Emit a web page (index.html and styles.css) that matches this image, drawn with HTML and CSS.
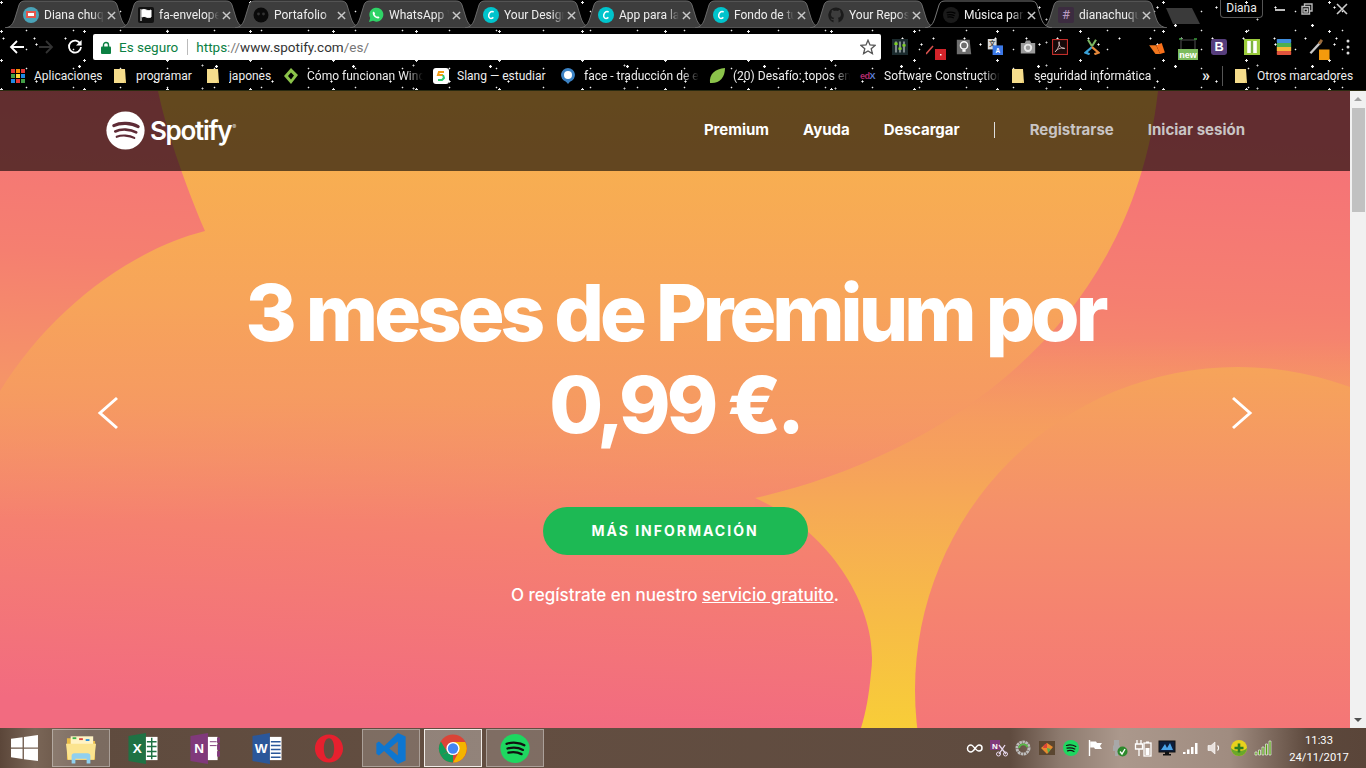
FILE: index.html
```html
<!DOCTYPE html>
<html lang="es">
<head>
<meta charset="utf-8">
<title>Música para todos - Spotify</title>
<link rel="stylesheet" href="styles.css">
</head>
<body>
<svg class="defs" width="0" height="0" aria-hidden="true">
  <defs>
    <symbol id="tabshape" viewBox="0 0 127 28"><path d="M0 28 C6 27 8 24 10 18 L14 5 C15 2 17 1 20 1 L106 1 C109 1 111 2 112 5 L116 18 C118 24 121 27 127 28 Z"/></symbol>
    <symbol id="folder" viewBox="0 0 16 16"><path d="M2 1 H13 L14 15 H2 Z" fill="#f6dd8c"/><path d="M12 1 V13 L14 15 H12 Z" fill="#e7c565"/></symbol>
    <symbol id="canva" viewBox="0 0 16 16"><circle cx="8" cy="8" r="8" fill="#00c4cc"/><path d="M10.6 5.2 C9.4 3.8 6.4 4.6 5.7 8 C5.2 11 7.6 12.6 10.4 10.4" fill="none" stroke="#fff" stroke-width="1.5"/></symbol>
    <symbol id="close" viewBox="0 0 10 10"><path d="M1 1 L9 9 M9 1 L1 9" stroke="#c8c8c8" stroke-width="1.6"/></symbol>
  </defs>
</svg>

<header class="chrome">
  <div class="tabstrip">
    <div class="tab">
      <svg class="tab-bg"><use href="#tabshape"/></svg>
      <svg class="fav" viewBox="0 0 16 16"><circle cx="8" cy="8" r="8" fill="#4aa3b8"/><rect x="3" y="4" width="10" height="7" fill="#e2574c"/><rect x="5" y="6" width="6" height="3" fill="#fff"/></svg>
      <span class="tab-title">Diana chuquimarca</span><svg class="tab-x"><use href="#close"/></svg>
    </div>
    <div class="tab">
      <svg class="tab-bg"><use href="#tabshape"/></svg>
      <svg class="fav" viewBox="0 0 16 16"><rect width="16" height="16" rx="2" fill="#111"/><path d="M3 2 V14 M4 3 C7 1 9 5 13 3 V10 C9 12 7 8 4 10 Z" fill="#fff" stroke="#fff"/></svg>
      <span class="tab-title">fa-envelope</span><svg class="tab-x"><use href="#close"/></svg>
    </div>
    <div class="tab">
      <svg class="tab-bg"><use href="#tabshape"/></svg>
      <svg class="fav" viewBox="0 0 16 16"><circle cx="8" cy="8" r="7.5" fill="#0a0a0a"/><circle cx="5.5" cy="7" r="1.4" fill="#333"/><circle cx="10.5" cy="7" r="1.4" fill="#333"/></svg>
      <span class="tab-title">Portafolio</span><svg class="tab-x"><use href="#close"/></svg>
    </div>
    <div class="tab">
      <svg class="tab-bg"><use href="#tabshape"/></svg>
      <svg class="fav" viewBox="0 0 16 16"><path d="M1 15 L2.2 11 A7 7 0 1 1 5 13.8 Z" fill="#2fd366"/><path d="M5.2 4.6 C4 6 5 8.6 6.6 10 C8.2 11.4 10.6 12 11.6 10.8 L10.2 9.2 L9 9.8 C8 9.2 7 8.2 6.6 7.2 L7.2 6 Z" fill="#fff"/></svg>
      <span class="tab-title">WhatsApp Web</span><svg class="tab-x"><use href="#close"/></svg>
    </div>
    <div class="tab">
      <svg class="tab-bg"><use href="#tabshape"/></svg>
      <svg class="fav"><use href="#canva"/></svg>
      <span class="tab-title">Your Design</span><svg class="tab-x"><use href="#close"/></svg>
    </div>
    <div class="tab">
      <svg class="tab-bg"><use href="#tabshape"/></svg>
      <svg class="fav"><use href="#canva"/></svg>
      <span class="tab-title">App para la web</span><svg class="tab-x"><use href="#close"/></svg>
    </div>
    <div class="tab">
      <svg class="tab-bg"><use href="#tabshape"/></svg>
      <svg class="fav"><use href="#canva"/></svg>
      <span class="tab-title">Fondo de tu web</span><svg class="tab-x"><use href="#close"/></svg>
    </div>
    <div class="tab">
      <svg class="tab-bg"><use href="#tabshape"/></svg>
      <svg class="fav" viewBox="0 0 16 16"><path d="M8 .5 A7.7 7.7 0 0 0 5.5 15.5 V13 C3.5 13.4 3 12 2.6 11.2 C4 11.6 4.6 12.6 5.6 12 C5.7 11.4 6 11 6.2 10.8 C4 10.4 3 9.4 3 7.2 C3 6.2 3.4 5.6 3.8 5 C3.6 4.4 3.6 3.6 4 3 C5 3 5.6 3.6 6 3.9 C7.2 3.6 8.8 3.6 10 3.9 C10.4 3.6 11 3 12 3 C12.4 3.6 12.4 4.4 12.2 5 C12.6 5.6 13 6.2 13 7.2 C13 9.4 12 10.4 9.8 10.8 C10.2 11.2 10.5 11.8 10.5 12.6 V15.5 A7.7 7.7 0 0 0 8 .5 Z" fill="#1b1b1b"/></svg>
      <span class="tab-title">Your Repositories</span><svg class="tab-x"><use href="#close"/></svg>
    </div>
    <div class="tab tab-active">
      <svg class="tab-bg"><use href="#tabshape"/></svg>
      <svg class="fav" viewBox="0 0 16 16"><circle cx="8" cy="8" r="8" fill="#1a1a1a"/><path d="M3.6 5.6 C6.5 4.8 9.8 5 12.4 6.4 M4 8 C6.5 7.3 9.2 7.5 11.6 8.8 M4.4 10.2 C6.5 9.7 8.8 9.9 10.8 11" fill="none" stroke="#000" stroke-width="1.2"/></svg>
      <span class="tab-title">Música para todos</span><svg class="tab-x"><use href="#close"/></svg>
    </div>
    <div class="tab">
      <svg class="tab-bg"><use href="#tabshape"/></svg>
      <span class="fav fav-hash">#</span>
      <span class="tab-title">dianachuquimarca</span><svg class="tab-x"><use href="#close"/></svg>
    </div>
    <svg class="newtab" viewBox="0 0 36 18"><path d="M1 1 H27 L35 17 H8 Z"/></svg>
    <div class="winctl">
      <span class="profile">Diana</span>
      <span class="winbtn"><svg viewBox="0 0 12 12"><rect x="1" y="6" width="10" height="2" fill="#bbb"/></svg></span>
      <span class="winbtn"><svg viewBox="0 0 12 12"><path d="M3.5 3.5 V1 H11 V8 H8.5 M1 3.5 H8.5 V11 H1 Z M3 6 H6.5 V9 H3 Z" fill="none" stroke="#bbb" stroke-width="1.4"/></svg></span>
      <span class="winbtn"><svg viewBox="0 0 12 12"><path d="M1 1 L11 11 M11 1 L1 11" stroke="#ccc" stroke-width="1.6"/></svg></span>
    </div>
  </div>

  <div class="toolbar">
    <svg class="nav-ic" viewBox="0 0 16 16"><path d="M15 8 H2 M8 2 L2 8 L8 14" fill="none" stroke="#fff" stroke-width="1.8"/></svg>
    <svg class="nav-ic" viewBox="0 0 16 16"><path d="M1 8 H14 M8 2 L14 8 L8 14" fill="none" stroke="#333" stroke-width="1.8"/></svg>
    <svg class="nav-ic" viewBox="0 0 16 16"><path d="M13.4 5 A6 6 0 1 0 14 8" fill="none" stroke="#fff" stroke-width="1.8"/><path d="M14.6 1 V6.6 H9 Z" fill="#fff"/></svg>
    <div class="omnibox">
      <svg class="lock" viewBox="0 0 10 13"><path d="M2.5 6 V4 A2.5 2.5 0 0 1 7.5 4 V6" fill="none" stroke="#0b8043" stroke-width="1.4"/><rect y="5.5" width="10" height="7.5" rx="1" fill="#0b8043"/></svg>
      <span class="secure">Es seguro</span>
      <span class="url"><span class="https">https</span><span class="slash">://</span>www.spotify.com<span class="slash">/es/</span></span>
      <svg class="star" viewBox="0 0 16 16"><path d="M8 1.2 L10 6 L15 6.4 L11.2 9.7 L12.4 14.6 L8 12 L3.6 14.6 L4.8 9.7 L1 6.4 L6 6 Z" fill="none" stroke="#555" stroke-width="1.3"/></svg>
    </div>
    <div class="exts">
      <svg viewBox="0 0 20 20"><rect width="20" height="20" fill="#1b2b2e"/><path d="M5 3 V17 M10 3 V17 M15 3 V17" stroke="#cfd8d8" stroke-width="1.4"/><path d="M3 6 H7 M8 12 H12 M13 8 H17" stroke="#7ed321" stroke-width="3"/></svg>
      <svg class="ext-red" viewBox="0 0 20 21"><path d="M0 15 L7 7" stroke="#d9534f" stroke-width="1.5"/><rect x="9" y="10" width="11" height="11" fill="#d2232a"/><rect x="14" y="15" width="1.5" height="1.5" fill="#fff"/></svg>
      <svg viewBox="0 0 20 20"><path d="M1 1 H17 L19 19 H1 Z" fill="#6e6e6e"/><circle cx="10" cy="8" r="4.500" fill="none" stroke="#fff" stroke-width="1.800"/><path d="M8 13 H12 V16 H8 Z" fill="#fff"/></svg>
      <svg viewBox="0 0 20 20"><rect x="1" y="0" width="11" height="13" fill="#d8d8d8"/><text x="2.500" y="9" class="ext-mini" fill="#444">文</text><rect x="7" y="8" width="13" height="12" fill="#3b78e7"/><text x="10.500" y="18" class="ext-mini" fill="#fff">A</text></svg>
      <svg viewBox="0 0 20 20"><path d="M1 5 H6 L7.500 2 H12.500 L14 5 H19 V18 H1 Z" fill="#9a9a9a"/><circle cx="10" cy="11" r="4" fill="none" stroke="#e8e8e8" stroke-width="2.400"/></svg>
      <svg viewBox="0 0 20 20"><rect x=".7" y=".7" width="18.600" height="18.600" fill="#160808" stroke="#c9302c" stroke-width="1.300"/><path d="M4 16 C7 13 10 7 9 3.500 C8.500 3 8 4 9 7 C10 10 13 12.500 16 12 C16 10.500 11 11 8 12.500 C6 13.500 5 15 4 16 Z" fill="none" stroke="#e8d0d0" stroke-width="1"/></svg>
      <svg viewBox="0 0 20 20"><path d="M10 9 L5 1 M10 9 L15 1" stroke="#7bb662" stroke-width="2.600"/><path d="M10 10 L2 17 L7 19" fill="none" stroke="#3aa2d8" stroke-width="2.800"/><path d="M10 10 L18 17 L13 19" fill="none" stroke="#e8893a" stroke-width="2.800"/></svg>
      <svg class="ext-orange" viewBox="0 0 20 14"><path d="M0 3 H9 L14 14 H8 Z" fill="#f0761e"/><path d="M9 3 L16 0 L20 12 L14 14 Z" fill="#f8701a"/></svg>
      <svg class="ext-new" viewBox="0 0 20 22"><path d="M3 2 H17 V11 M3 11 V2" fill="none" stroke="#333" stroke-width="1.600"/><path d="M1 1 H4 M16 1 H19" stroke="#3d9a3d" stroke-width="1.600"/><rect y="11" width="20" height="11" fill="#7dbc5d"/><text x="10" y="20" class="ext-new-t">new</text></svg>
      <svg viewBox="0 0 20 20"><rect width="20" height="20" rx="3" fill="#563d7c"/><text x="10" y="15.500" class="ext-b">B</text></svg>
      <svg viewBox="0 0 20 20"><rect width="20" height="20" fill="#9ccc3d"/><rect x="4" y="2.500" width="12" height="15" fill="#fff"/><rect x="8.500" y="2.500" width="3" height="15" fill="#7cb342"/></svg>
      <svg viewBox="0 0 20 20"><rect x="1" y="0" width="18" height="5" rx="1" fill="#3f8ede"/><rect x="1" y="5" width="18" height="5" fill="#4caf50"/><rect x="1" y="10" width="18" height="5" fill="#f5b63a"/><rect x="1" y="15" width="18" height="5" rx="1" fill="#e0533d"/></svg>
      <svg class="ext-drop" viewBox="0 0 21 22"><path d="M1 15 L12 3" stroke="#c9c9c9" stroke-width="2.400"/><path d="M10 5 L13 1" stroke="#9a6a3a" stroke-width="3"/><rect x="10" y="11" width="11" height="11" fill="#f59a0c"/></svg>
      <svg class="menu-dots" viewBox="0 0 4 16"><circle cx="2" cy="2" r="1.500" fill="#ddd"/><circle cx="2" cy="8" r="1.500" fill="#ddd"/><circle cx="2" cy="14" r="1.500" fill="#ddd"/></svg>
    </div>
  </div>

  <nav class="bookmarks">
    <a class="bm"><svg class="bm-ic" viewBox="0 0 16 16"><rect x="1" y="1" width="4" height="4" fill="#e53935"/><rect x="6" y="1" width="4" height="4" fill="#fb8c00"/><rect x="11" y="1" width="4" height="4" fill="#e53935"/><rect x="1" y="6" width="4" height="4" fill="#43a047"/><rect x="6" y="6" width="4" height="4" fill="#fdd835"/><rect x="11" y="6" width="4" height="4" fill="#1e88e5"/><rect x="1" y="11" width="4" height="4" fill="#1e88e5"/><rect x="6" y="11" width="4" height="4" fill="#e53935"/><rect x="11" y="11" width="4" height="4" fill="#43a047"/></svg><span class="bm-t">Aplicaciones</span></a>
    <a class="bm"><svg class="bm-ic"><use href="#folder"/></svg><span class="bm-t">programar</span></a>
    <a class="bm"><svg class="bm-ic"><use href="#folder"/></svg><span class="bm-t">japones</span></a>
    <a class="bm"><svg class="bm-ic" viewBox="0 0 16 16"><path d="M8 0 L15 7 L8 16 L1 8 Z M8 4.500 L5 8 L8 11.500 L11 7.400 Z" fill="#8bc34a" fill-rule="evenodd"/></svg><span class="bm-t bm-fade">Cómo funcionan Windows</span></a>
    <a class="bm"><svg class="bm-ic" viewBox="0 0 16 16"><rect width="16" height="16" rx="3" fill="#fff"/><path d="M11 4 H6 L5 7 H10" fill="none" stroke="#f39c12" stroke-width="2"/><path d="M10 7 L11 10 L9 12 H5" fill="none" stroke="#2ecc71" stroke-width="2"/></svg><span class="bm-t">Slang — estudiar</span></a>
    <a class="bm"><svg class="bm-ic" viewBox="0 0 16 16"><path d="M8 0 A7 7 0 0 1 10 13.700 L8 16 L6 13.700 A7 7 0 0 1 8 0 Z" fill="#3b82c4"/><circle cx="8" cy="7" r="4" fill="#fff"/></svg><span class="bm-t bm-fade">face - traducción de español</span></a>
    <a class="bm"><svg class="bm-ic" viewBox="0 0 16 16"><path d="M1 15 C0 6 6 1 16 0 C16 10 10 16 1 15 Z" fill="#8bc34a"/></svg><span class="bm-t bm-fade">(20) Desafío: topos en el</span></a>
    <a class="bm"><span class="bm-ic edx"><span class="edx-e">ed</span>X</span><span class="bm-t bm-fade">Software Construction in</span></a>
    <a class="bm"><svg class="bm-ic"><use href="#folder"/></svg><span class="bm-t bm-fade">seguridad informática</span></a>
    <a class="bm bm-more">»</a>
    <span class="bm-sep"></span>
    <a class="bm"><svg class="bm-ic"><use href="#folder"/></svg><span class="bm-t">Otros marcadores</span></a>
  </nav>
</header>

<div class="viewport">
  <main class="hero">
    <svg class="hero-bg" viewBox="0 91 1350 637" aria-hidden="true">
      <defs>
        <linearGradient id="gBase" gradientUnits="userSpaceOnUse" x1="690" y1="91" x2="660" y2="728">
          <stop offset="0" stop-color="#f57079"/>
          <stop offset=".3" stop-color="#f57f70"/>
          <stop offset=".5" stop-color="#f59468"/>
          <stop offset=".72" stop-color="#f58070"/>
          <stop offset="1" stop-color="#f26b80"/>
        </linearGradient>
        <linearGradient id="gA" gradientUnits="userSpaceOnUse" x1="0" y1="91" x2="0" y2="520">
          <stop offset="0" stop-color="#f8b44c"/>
          <stop offset=".5" stop-color="#f7a45a"/>
          <stop offset=".72" stop-color="#f69c60" stop-opacity=".85"/>
          <stop offset="1" stop-color="#f59368" stop-opacity="0"/>
        </linearGradient>
        <linearGradient id="gB" gradientUnits="userSpaceOnUse" x1="0" y1="340" x2="0" y2="728">
          <stop offset="0" stop-color="#f6a05c" stop-opacity="0"/>
          <stop offset=".2" stop-color="#f6a05c" stop-opacity=".7"/>
          <stop offset=".42" stop-color="#f6a956"/>
          <stop offset="1" stop-color="#f8cd38"/>
        </linearGradient>
        <linearGradient id="gC" gradientUnits="userSpaceOnUse" x1="0" y1="367" x2="0" y2="728">
          <stop offset="0" stop-color="#f6a45a"/>
          <stop offset=".4" stop-color="#f5906a"/>
          <stop offset=".7" stop-color="#f58270"/>
          <stop offset="1" stop-color="#f47677"/>
        </linearGradient>
      </defs>
      <rect x="0" y="91" width="1350" height="637" fill="url(#gBase)"/>
      <path d="M158 91 C165 125 183 180 205 231 C130 250 50 310 0 391 L0 520 L755 520 L755 498 C925 460 1130 340 1158 91 Z" fill="url(#gA)"/>
      <path d="M755 498 C925 460 1130 340 1158 91 L1350 91 L1350 728 L861 728 C866 712 869 695 871 673 C880 610 830 530 755 498 Z" fill="url(#gB)"/>
      <circle cx="1238" cy="690" r="323" fill="url(#gC)"/>
    </svg>

    <div class="site-nav">
      <a class="logo">
        <svg class="logo-mark" viewBox="0 0 40 40"><circle cx="20" cy="20" r="19.600" fill="#fff"/><path d="M8 15 C15 11.500 26 12 33 16" fill="none" stroke="#5e2b36" stroke-width="3.200" stroke-linecap="round"/><path d="M9.500 21 C15.500 18 25 18.500 31 22" fill="none" stroke="#5e2b36" stroke-width="2.700" stroke-linecap="round"/><path d="M11 26.500 C16 24.400 24 24.800 29 27.600" fill="none" stroke="#5e2b36" stroke-width="2.200" stroke-linecap="round"/></svg>
        <span class="logo-text">Spotify</span><span class="logo-r">®</span>
      </a>
      <ul class="menu">
        <li class="menu-main">Premium</li>
        <li class="menu-main">Ayuda</li>
        <li class="menu-main">Descargar</li>
        <li class="menu-sep"></li>
        <li class="menu-dim">Registrarse</li>
        <li class="menu-dim">Iniciar sesión</li>
      </ul>
    </div>

    <div class="carousel">
      <svg class="chev" viewBox="0 0 22 34"><path d="M20 2 L3 17 L20 32" fill="none" stroke="#fff" stroke-width="3"/></svg>
      <div class="promo">
        <h1 class="headline">3 meses de Premium por 0,99&nbsp;€.</h1>
        <a class="cta">MÁS INFORMACIÓN</a>
        <p class="sub">O regístrate en nuestro <a class="sub-link">servicio gratuito</a>.</p>
      </div>
      <svg class="chev" viewBox="0 0 22 34"><path d="M2 2 L19 17 L2 32" fill="none" stroke="#fff" stroke-width="3"/></svg>
    </div>
  </main>
  <aside class="scrollbar">
    <span class="sb-up"></span>
    <span class="sb-thumb"></span>
    <span class="sb-down"></span>
  </aside>
</div>

<footer class="taskbar">
  <span class="start"><svg viewBox="0 0 28 27"><path d="M0 4 L12 2.400 V13 H0 Z M13.400 2.200 L28 0 V13 H13.400 Z M0 14.400 H12 V25 L0 23.200 Z M13.400 14.400 H28 V27 L13.400 25.200 Z" fill="#fff"/></svg></span>
  <span class="task task-open"><svg viewBox="0 0 32 32"><path d="M1 5 H12 L14 8 H31 V28 H1 Z" fill="#e8bb45"/><rect x="5" y="3" width="24" height="9" fill="#fff3c4"/><rect x="7" y="4" width="4" height="2" fill="#3fb24a"/><rect x="14" y="5" width="4" height="2" fill="#d9443a"/><rect x="21" y="6" width="4" height="2" fill="#2f8fd8"/><path d="M0 11 H32 L30 28 H2 Z" fill="#fbe48f"/><path d="M6 32 V24 C6 22 7 21 9 21 H23 C25 21 26 22 26 24 V32 H22 V27 H10 V32 Z" fill="#8fd0ef"/></svg></span>
  <span class="task"><svg viewBox="0 0 30 32"><path d="M0 3 L18 0 V32 L0 29 Z" fill="#1f7244"/><rect x="18" y="4" width="12" height="24" fill="#fff"/><path d="M19 9 H29 M19 14 H29 M19 19 H29 M19 24 H29 M24 5 V27" stroke="#1f7244" stroke-width="1.500"/><text x="9" y="21" class="office-l">X</text></svg></span>
  <span class="task"><svg viewBox="0 0 30 32"><path d="M0 3 L18 0 V32 L0 29 Z" fill="#80397b"/><rect x="18" y="4" width="10" height="24" fill="#fff"/><path d="M28 5 H30 V10 H28 Z M28 12 H30 V17 H28 Z M28 19 H30 V24 H28 Z M20 9 H27 M20 13 H27" stroke="#80397b" fill="#80397b"/><text x="9" y="21" class="office-l">N</text></svg></span>
  <span class="task"><svg viewBox="0 0 30 32"><path d="M0 3 L18 0 V32 L0 29 Z" fill="#2b579a"/><rect x="18" y="4" width="12" height="24" fill="#fff"/><path d="M19 9 H29 M19 13 H29 M19 17 H29 M19 21 H29 M19 25 H29" stroke="#2b579a" stroke-width="1.500"/><text x="9" y="21" class="office-l">W</text></svg></span>
  <span class="task"><svg viewBox="0 0 32 32"><path d="M16 1 C24 1 31 7.500 31 16 C31 24.500 24 31 16 31 C7 31 1 24 1 16 C1 8 7 1 16 1 Z M16 5 C12.500 5 10.500 10 10.500 16 C10.500 22 12.500 27 16 27 C19.500 27 21.500 22 21.500 16 C21.500 10 19.500 5 16 5 Z" fill="#e6202e" fill-rule="evenodd"/></svg></span>
  <span class="task task-open"><svg viewBox="0 0 34 36"><path d="M25 0 L34 4 V32 L25 36 L9 21 L3 26 L0 24 V12 L3 10 L9 15 Z M25 10 L15 18 L25 26 Z" fill="#0e76d0" fill-rule="evenodd"/></svg></span>
  <span class="task task-active"><svg viewBox="0 0 32 32"><circle cx="16" cy="16" r="15" fill="#db4437"/><path d="M16 16 L3 23.500 A15 15 0 0 0 16 31 Z M3 23.500 A15 15 0 0 1 3 8.500 L10 20 Z" fill="#0f9d58"/><path d="M16 9 H29 A15 15 0 0 1 16 31 L22 20 Z" fill="#f4b400"/><circle cx="16" cy="16" r="7" fill="#fff"/><circle cx="16" cy="16" r="5.500" fill="#4285f4"/></svg></span>
  <span class="task task-open"><svg viewBox="0 0 32 32"><circle cx="16" cy="16" r="15.500" fill="#1ed760"/><path d="M7 11 C13 9 21 9.500 26 12.500 M8 16 C13.500 14.500 20 15 24.500 17.500 M9 20.500 C14 19.500 19 20 23 22" fill="none" stroke="#111" stroke-width="2.400" stroke-linecap="round"/></svg></span>

  <div class="tray">
    <span class="tray-i"><svg viewBox="0 0 18 18"><path d="M5 13 A3.500 3.500 0 0 1 5 6 C7.500 6 9.500 12 13 12 A3 3 0 0 0 13 6 C10 6 8 13 5 13 Z" fill="none" stroke="#fff" stroke-width="1.500"/></svg></span>
    <span class="tray-i"><svg viewBox="0 0 18 18"><rect x="0" y="1" width="10" height="10" fill="#80397b"/><text x="5" y="9.500" class="tray-n">N</text><path d="M9 6 L16 15 M15 6 L9 15" stroke="#e8d8ee" stroke-width="1.300"/><circle cx="8.500" cy="15" r="2" fill="none" stroke="#e8d8ee"/><circle cx="15.500" cy="15" r="2" fill="none" stroke="#e8d8ee"/></svg></span>
    <span class="tray-i"><svg viewBox="0 0 18 18"><circle cx="9" cy="9" r="6" fill="none" stroke="#bdbdbd" stroke-width="3" stroke-dasharray="2.400 .6"/><path d="M5 9 A4.500 4.500 0 0 1 13.500 8" fill="none" stroke="#58b947" stroke-width="1.800"/></svg></span>
    <span class="tray-i"><svg viewBox="0 0 18 18"><rect x="1" y="2" width="16" height="14" fill="#5b4630"/><path d="M3 9 L9 4 L15 8 L9 15 Z" fill="#e88a2c"/><path d="M6 6 L9 4 L9 9 L5 9 Z" fill="#d9443a"/><path d="M9 9 L13 10 L10 14 Z" fill="#4caf50"/></svg></span>
    <span class="tray-i"><svg viewBox="0 0 18 18"><circle cx="9" cy="9" r="8" fill="#1ed760"/><path d="M4.500 6.500 C7.500 5.600 11 6 13.800 7.500 M5 9.200 C7.500 8.500 10.400 8.800 12.800 10 M5.500 11.800 C7.800 11.200 10 11.400 12 12.500" fill="none" stroke="#111" stroke-width="1.200" stroke-linecap="round"/></svg></span>
    <span class="tray-i"><svg viewBox="0 0 18 18"><path d="M3.500 1 V17" stroke="#fff" stroke-width="1.400"/><path d="M4.200 2.500 H10 L11 4 H16 L14 7 L16 10 H9 L8 8.500 H4.200 Z" fill="#fff"/></svg></span>
    <span class="tray-i"><svg viewBox="0 0 18 18"><path d="M4 1 H9 V6 L10 7 V12 H3 V7 L4 6 Z" fill="#a8a8a8"/><rect x="5" y="12" width="3" height="5" fill="#a8a8a8"/><circle cx="12.500" cy="12.500" r="5" fill="#2d8a2d"/><path d="M10 12.500 L12 15 L15 10" fill="none" stroke="#fff" stroke-width="1.400"/></svg></span>
    <span class="tray-i"><svg viewBox="0 0 18 18"><rect x="10" y="4" width="7" height="13" fill="none" stroke="#fff" stroke-width="1.300"/><rect x="12" y="2.500" width="3" height="1.500" fill="#fff"/><rect x="11.500" y="9" width="4" height="7" fill="#fff"/><path d="M3 1 V5 M7 1 V5 M1.500 5 H8.500 V10 H1.500 Z M5 10 V17" stroke="#fff" stroke-width="1.300" fill="none"/></svg></span>
    <span class="tray-i"><svg viewBox="0 0 18 18"><rect x="1" y="2" width="16" height="11" fill="#0d1e3c" stroke="#111"/><path d="M3 11 L7 5 L9 9 L12 4 L15 11 Z" fill="#4aa3e8"/><rect x="7" y="13" width="4" height="2" fill="#111"/><rect x="5" y="15" width="8" height="1.500" fill="#111"/></svg></span>
    <span class="tray-i"><svg viewBox="0 0 18 18"><path d="M1 13 H3.500 V15 H1 Z M5 10.500 H7.500 V15 H5 Z M9 8 H11.500 V15 H9 Z M13 4 H15.500 V15 H13 Z" fill="#fff"/></svg></span>
    <span class="tray-i"><svg viewBox="0 0 18 18"><path d="M2 6.500 H5 L9 3 V15 L5 11.500 H2 Z" fill="#e8e0dc" stroke="#fff" stroke-width=".6"/><path d="M11.500 6.500 A3.500 3.500 0 0 1 11.500 11.500" fill="none" stroke="#fff" stroke-width="1.200"/></svg></span>
    <span class="tray-i"><svg viewBox="0 0 18 18"><circle cx="9" cy="9" r="8" fill="#e8d21d"/><path d="M1 9 A8 8 0 0 0 17 9 C14 13 4 13 1 9 Z" fill="#6aa82a"/><path d="M9 4.500 V13.500 M4.500 9 H13.500" stroke="#2e7d1f" stroke-width="2.600"/></svg></span>
    <span class="tray-i"><svg viewBox="0 0 18 18"><path d="M1 13 H3 V16 H1 Z M4.500 11 H6.500 V16 H4.500 Z M8 8 H10 V16 H8 Z M11.500 5 H13.500 V16 H11.500 Z M15 2 H17 V16 H15 Z" fill="#58a016" stroke="#fff" stroke-width=".6"/></svg></span>
  </div>
  <div class="clock"><span>11:33</span><span>24/11/2017</span></div>
</footer>
</body>
</html>
```

FILE: styles.css
```css
* { box-sizing: border-box; }
html, body { margin: 0; height: 100%; }
body {
  width: 1366px;
  height: 768px;
  overflow: hidden;
  display: flex;
  flex-direction: column;
  font-family: "Inter", "Liberation Sans", sans-serif;
  background: #000;
}
.defs { position: absolute; }
a { color: inherit; text-decoration: none; }

/* browser chrome */
.chrome {
  height: 91px;
  flex: none;
  color: #eee;
  font-family: "Roboto", "Liberation Sans", sans-serif;
  background-color: #000;
  background-image:
    radial-gradient(circle, #fff 0 1px, transparent 1.5px),
    radial-gradient(circle, #eee 0 1px, transparent 1.4px),
    radial-gradient(circle, #fff 0 .8px, transparent 1.3px),
    radial-gradient(circle, #ccc 0 .8px, transparent 1.2px),
    radial-gradient(circle, #fff 0 .8px, transparent 1.2px),
    radial-gradient(circle, #eee 0 .7px, transparent 1.1px);
  background-size: 137px 41px, 83px 29px, 59px 37px, 211px 23px, 31px 53px, 47px 19px;
  background-position: 11px 5px, 43px 17px, 7px 26px, 97px 8px, 19px 12px, 3px 2px;
}
.tabstrip {
  height: 28px;
  display: flex;
  padding-left: 5px;
  position: relative;
}
.tab {
  position: relative;
  width: 115px;
  height: 28px;
  flex: none;
  display: flex;
  align-items: center;
  padding: 2px 0 0 18px;
  font-size: 12px;
}
.tab-bg {
  position: absolute;
  left: 0;
  top: 0;
  width: 127px;
  height: 28px;
  fill: #3d3d3d;
  stroke: #6a6a6a;
  stroke-width: 1;
}
.tab-active { z-index: 2; }
.tab-active .tab-bg { fill: #000; stroke: #777; }
.fav {
  position: relative;
  width: 16px;
  height: 16px;
  flex: none;
}
.fav-hash {
  background: #3c2c40;
  color: #b89ac0;
  font-size: 13px;
  line-height: 16px;
  text-align: center;
  border-radius: 2px;
}
.tab-title {
  position: relative;
  width: 60px;
  margin-left: 5px;
  flex: none;
  overflow: hidden;
  white-space: nowrap;
  -webkit-mask-image: linear-gradient(to right, #000 80%, transparent);
  mask-image: linear-gradient(to right, #000 80%, transparent);
}
.tab-x {
  position: relative;
  width: 9px;
  height: 9px;
  margin-left: 3px;
  flex: none;
}
.newtab {
  width: 36px;
  height: 18px;
  margin: 7px 0 0 10px;
  fill: #3a3a3a;
  flex: none;
}
.winctl {
  margin-left: auto;
  display: flex;
  align-items: flex-start;
  padding-right: 2px;
}
.profile {
  width: 43px;
  height: 18px;
  margin-right: 3px;
  border: 1px solid #555;
  border-top: 0;
  border-radius: 0 0 4px 4px;
  font-size: 12px;
  line-height: 16px;
  text-align: center;
}
.winbtn {
  width: 27px;
  height: 18px;
  display: flex;
  align-items: center;
  justify-content: center;
}
.winbtn:last-child { width: 44px; }
.winbtn svg { width: 12px; height: 12px; }

.toolbar {
  height: 33px;
  display: flex;
  align-items: center;
  padding: 4px 0 0 9px;
  position: relative;
}
.nav-ic {
  width: 16px;
  height: 16px;
  margin-right: 13px;
  flex: none;
}
.omnibox {
  width: 788px;
  height: 26px;
  margin: 1px 0 0 -3px;
  background: #fff;
  border-radius: 2px;
  display: flex;
  align-items: center;
  padding-left: 8px;
  color: #333;
  font-size: 13.5px;
  flex: none;
}
.lock { width: 10px; height: 13px; flex: none; }
.secure {
  margin-left: 8px;
  padding-right: 9px;
  color: #0b8043;
  border-right: 1px solid #bbb;
  line-height: 16px;
}
.url { margin-left: 8px; color: #333; }
.https { color: #0b8043; }
.slash { color: #777; }
.star { width: 16px; height: 16px; margin-left: auto; margin-right: 5px; }
.exts {
  display: grid;
  grid-template-columns: 34px 30px 31px 33px 32px 32px 65px 29px 33px 33px 32px 33px 37px 6px;
  padding-left: 11px;
  align-self: flex-start;
  margin-top: 7px;
  height: 22px;
  align-items: start;
  justify-items: start;
}
.exts svg { width: 16px; height: 16px; }
.exts .ext-red { width: 20px; height: 21px; }
.exts .ext-orange { width: 16px; height: 11px; margin-top: 4px; }
.exts .ext-new { width: 20px; height: 22px; margin-top: -1px; }
.exts .ext-drop { width: 21px; height: 21px; }
.exts .menu-dots { width: 4px; height: 16px; }
.ext-mini { font: 700 8px "Liberation Sans", "Noto Sans CJK SC", sans-serif; }
.ext-new-t { font: 700 9px "Liberation Sans", sans-serif; fill: #fff; text-anchor: middle; }
.ext-b { font: 700 16px "Liberation Sans", sans-serif; fill: #fff; text-anchor: middle; }

.bookmarks {
  height: 30px;
  display: grid;
  grid-template-columns: 102px 93px 78px 150px 127px 149px 151px 150px 180px 32px 11px 1fr;
  padding-left: 10px;
  align-items: center;
  font-size: 12px;
  color: #eee;
  border-bottom: 1px solid #2a2a10;
}
.bm {
  display: flex;
  align-items: center;
  gap: 8px;
  min-width: 0;
  padding-right: 10px;
}
.bm-ic {
  width: 16px;
  height: 16px;
  flex: none;
}
.bm-t {
  flex: 1;
  min-width: 0;
  overflow: hidden;
  white-space: nowrap;
}
.bm-fade {
  -webkit-mask-image: linear-gradient(to right, #000 85%, transparent);
  mask-image: linear-gradient(to right, #000 85%, transparent);
}
.bm-more { font-size: 16px; font-weight: 700; padding: 0 0 0 12px; }
.bm-sep { width: 1px; height: 20px; background: #555; }
.edx {
  font: 700 9px/16px "Liberation Sans", sans-serif;
  color: #5b7fd6;
  white-space: nowrap;
  letter-spacing: -.5px;
}
.edx-e { color: #b02a6b; }

/* page */
.viewport {
  height: 637px;
  flex: none;
  display: flex;
}
.hero {
  position: relative;
  width: 1350px;
  flex: none;
  overflow: hidden;
  color: #fff;
}
.hero-bg {
  position: absolute;
  inset: 0;
  width: 1350px;
  height: 637px;
}
.site-nav {
  position: relative;
  height: 80px;
  background: rgba(0, 0, 0, .6);
  display: flex;
  align-items: center;
  justify-content: space-between;
  padding: 0 105px 3px 106px;
}
.logo { display: flex; align-items: center; margin-top: 2px; }
.logo-mark { width: 39px; height: 39px; flex: none; }
.logo-text {
  margin-left: 5px;
  font-size: 26px;
  font-weight: 600;
  letter-spacing: -1.3px;
}
.logo-r { font-size: 6px; margin: -8px 0 0 1px; color: #ddd; }
.menu {
  display: flex;
  align-items: center;
  list-style: none;
  margin: 0;
  padding: 0;
  font-size: 15px;
  font-weight: 700;
}
.menu-main { margin-right: 34px; }
.menu-sep {
  width: 1px;
  height: 16px;
  background: #ddd;
  margin-right: 35px;
}
.menu-dim { color: #c9c5c5; }
.menu-dim:last-child { margin-left: 34px; }

.carousel {
  position: relative;
  display: flex;
  justify-content: space-between;
  align-items: flex-start;
  padding: 0 97px;
}
.chev {
  width: 22px;
  height: 34px;
  margin-top: 225px;
  flex: none;
}
.promo {
  width: 1000px;
  display: flex;
  flex-direction: column;
  align-items: center;
  text-align: center;
}
.headline {
  width: 900px;
  margin: 96px 0 0;
  font-size: 78px;
  line-height: 92px;
  font-weight: 800;
  letter-spacing: -4px;
}
.cta {
  width: 265px;
  height: 48px;
  margin-top: 56px;
  border-radius: 24px;
  background: #1db954;
  font-size: 14px;
  font-weight: 700;
  line-height: 47px;
  letter-spacing: 2px;
}
.sub {
  margin: 28px 0 0;
  font-size: 17px;
  font-weight: 500;
  line-height: 24px;
}
.sub-link { text-decoration: underline; }

.scrollbar {
  width: 16px;
  flex: none;
  background: #f1f1f1;
  display: flex;
  flex-direction: column;
  align-items: center;
  padding-top: 6px;
}
.sb-up {
  width: 0; height: 0;
  border: 4px solid transparent;
  border-top: 0;
  border-bottom: 4px solid #a0a0a0;
}
.sb-thumb {
  width: 13px;
  height: 104px;
  margin-top: 7px;
  background: #c1c1c1;
}
.sb-down {
  width: 0; height: 0;
  margin-top: auto;
  margin-bottom: 6px;
  border: 4px solid transparent;
  border-bottom: 0;
  border-top: 4px solid #505050;
}

/* taskbar */
.taskbar {
  height: 40px;
  flex: none;
  display: flex;
  align-items: center;
  color: #fff;
  font-family: "Roboto", "Liberation Sans", sans-serif;
  background: linear-gradient(to right, #5b4639 0, #7a6657 35px, #5f4b3e 90px, #634e41 500px, #5f4b3f 1010px, #8d7a6e 1060px, #ab988c 1120px, #a08c80 1230px, #5c483c 1310px, #5a4539 1366px);
}
.start {
  width: 48px;
  height: 40px;
  margin-right: 4px;
  display: flex;
  align-items: center;
  justify-content: center;
}
.start svg { width: 27px; height: 26px; }
.task {
  width: 58px;
  height: 38px;
  margin-right: 4px;
  display: flex;
  align-items: center;
  justify-content: center;
  border: 1px solid transparent;
  flex: none;
}
.task svg { width: 30px; height: 31px; }
.office-l { font: 700 14px "Liberation Sans", sans-serif; fill: #fff; text-anchor: middle; }
.task-open {
  background: rgba(255, 255, 255, .18);
  border-color: rgba(255, 255, 255, .35);
}
.task-active {
  background: rgba(255, 255, 255, .3);
  border-color: #f0ece8;
}
.tray {
  margin-left: auto;
  display: flex;
}
.tray-i {
  width: 24px;
  height: 24px;
  display: flex;
  align-items: center;
  justify-content: center;
}
.tray-i svg { width: 18px; height: 18px; }
.tray-n { font: 700 8px "Liberation Sans", sans-serif; fill: #fff; text-anchor: middle; }
.clock {
  width: 91px;
  display: flex;
  flex-direction: column;
  align-items: center;
  font-size: 11.2px;
  line-height: 17px;
  padding: 1px 3px 0 0;
}
```
